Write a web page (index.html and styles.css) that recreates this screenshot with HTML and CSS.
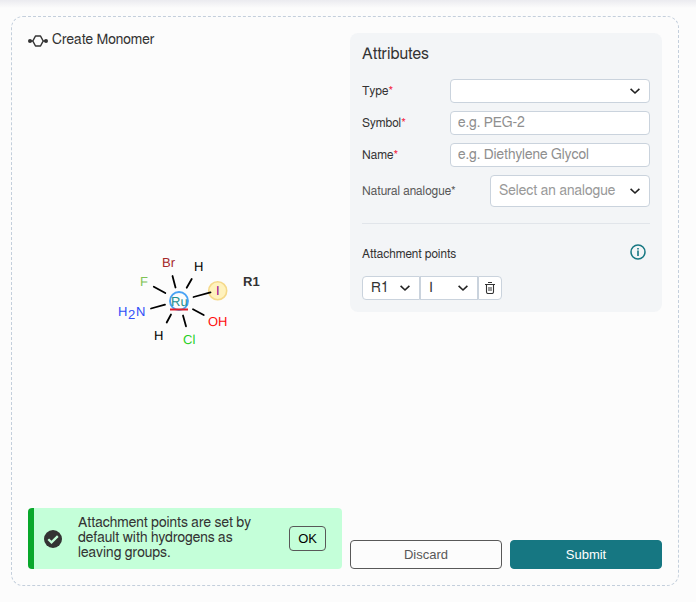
FILE: index.html
```html
<!DOCTYPE html>
<html lang="en">
<head>
<meta charset="utf-8">
<meta name="viewport" content="width=device-width, initial-scale=1">
<title>Create Monomer</title>
<link rel="stylesheet" href="styles.css">
</head>
<body>
<svg class="defs" aria-hidden="true">
  <symbol id="chevron" viewBox="0 0 16 16"><path d="M3.600 5.800l4.400 4.200 4.400-4.200" fill="none" stroke="currentColor" stroke-width="1.600"/></symbol>
</svg>
<main class="wizard">
  <section class="editor">
    <h1 class="heading">
      <svg class="heading-icon" viewBox="0 0 20 16" aria-hidden="true">
        <path d="M7.500 3h5l2.700 5-2.700 5h-5L4.800 8z" fill="none" stroke="#333" stroke-width="1.500" stroke-linejoin="round"/>
        <circle cx="2" cy="8" r="2" fill="#333"/><circle cx="18" cy="8" r="2" fill="#333"/>
        <path d="M2 8h2.800M15.200 8H18" stroke="#333" stroke-width="1.400"/>
      </svg>
      Create Monomer
    </h1>
    <div class="canvas">
      <svg class="molecule" viewBox="100 200 170 160" role="img" aria-label="Ruthenium complex">
        <circle cx="217.700" cy="290.700" r="9" fill="#fff2bd" stroke="#f5d98a" stroke-width="1.600"/>
        <g stroke="#000" stroke-width="1.800" stroke-linecap="round">
          <path d="M172.500 276l3 11.500M191.700 279l-5 8.700M193.500 297l17-4.600M193 309.300l10.700 5.700M183 315.500l3 10.800M171 314.500l-4.300 8M151 308.500l14-3.800M153.800 286.700l11.500 6.300"/>
        </g>
        <circle cx="179" cy="301" r="9" fill="none" stroke="#4aa3f5" stroke-width="1.900"/>
        <path d="M170 309.500h18" stroke="#e0202c" stroke-width="2"/>
        <g class="atoms">
          <text x="140" y="286" fill="#7fc356">F</text>
          <text x="162" y="267" fill="#a62929">Br</text>
          <text x="194" y="271" fill="#000">H</text>
          <text x="216" y="295" fill="#940094">I</text>
          <text x="171" y="306" fill="#248f8f">Ru</text>
          <text x="208" y="326" fill="#ff0d0d">OH</text>
          <text x="183" y="344" fill="#1fcf1f">Cl</text>
          <text x="154" y="340" fill="#000">H</text>
          <text x="118" y="316" fill="#3050f8">H</text>
          <text x="128" y="319" fill="#3050f8">2</text>
          <text x="136" y="316" fill="#3050f8">N</text>
          <text class="r-label" x="243" y="286" fill="#333">R1</text>
        </g>
      </svg>
    </div>
    <div class="notice" role="status">
      <svg class="notice-icon" viewBox="0 0 18 18" aria-hidden="true">
        <circle cx="9" cy="9" r="9" fill="#333"/>
        <path d="M4.300 9.200l3.200 3.200 6.300-6.300" fill="none" stroke="#c4ffd9" stroke-width="2.200"/>
      </svg>
      <p class="notice-text">Attachment points are set by default with hydrogens as leaving groups.</p>
      <button class="button ok" type="button">OK</button>
    </div>
  </section>

  <form class="side">
    <div class="attributes">
      <h2 class="title">Attributes</h2>
      <div class="fields">
        <div class="field">
          <label for="type">Type<span class="required">*</span></label>
          <span class="picker"><select id="type"><option></option></select><svg class="chevron" aria-hidden="true"><use href="#chevron"/></svg></span>
        </div>
        <div class="field">
          <label for="symbol">Symbol<span class="required">*</span></label>
          <input id="symbol" type="text" placeholder="e.g. PEG-2">
        </div>
        <div class="field">
          <label for="name">Name<span class="required">*</span></label>
          <input id="name" type="text" placeholder="e.g. Diethylene Glycol">
        </div>
        <div class="field analogue">
          <label for="analogue">Natural analogue*</label>
          <span class="picker"><select id="analogue"><option>Select an analogue</option></select><svg class="chevron" aria-hidden="true"><use href="#chevron"/></svg></span>
        </div>
      </div>
      <div class="points-head">
        <h3 class="points-title">Attachment points</h3>
        <button class="info" type="button" aria-label="About attachment points">
          <svg viewBox="0 0 16 16" aria-hidden="true"><circle cx="8" cy="8" r="7" fill="none" stroke="#167782" stroke-width="1.500"/><path d="M8 6.500v5.500M8 4v1.500" stroke="#167782" stroke-width="1.600"/></svg>
        </button>
      </div>
      <div class="points">
        <span class="picker"><select aria-label="Attachment point"><option>R1</option></select><svg class="chevron" aria-hidden="true"><use href="#chevron"/></svg></span>
        <span class="picker"><select aria-label="Leaving group"><option>I</option></select><svg class="chevron" aria-hidden="true"><use href="#chevron"/></svg></span>
        <button class="delete" type="button" aria-label="Delete attachment point">
          <svg viewBox="0 0 12 12" aria-hidden="true"><path d="M1 2.500h10M4 .5h4M2.500 2.500v7.500q0 1.500 1.500 1.500h4q1.500 0 1.500-1.500V2.500" fill="none" stroke="#333" stroke-width="1.100"/><path d="M4 5h4v4H4z" fill="#333" opacity=".5"/></svg>
        </button>
      </div>
    </div>
    <div class="actions">
      <button class="button discard" type="button">Discard</button>
      <button class="button submit" type="submit">Submit</button>
    </div>
  </form>
</main>
</body>
</html>
```
FILE: styles.css
```css
* { box-sizing: border-box; }

body {
  margin: 0;
  min-height: 100vh;
  display: flex;
  padding: 16px 17px 16px 11px;
  background: linear-gradient(#ebebf0, #fcfcfc 8px) #fcfcfc;
  color: #333;
  font: 14px/16px FreeSans, "Liberation Sans", Arial, sans-serif;
  font-kerning: none;
}

h1, h2, h3, p { margin: 0; font-weight: 400; }
svg { display: block; }
button, input, select { font: inherit; font-kerning: none; color: inherit; margin: 0; }
button { cursor: pointer; }
.defs { position: absolute; width: 0; height: 0; }

.wizard {
  flex: 1;
  display: grid;
  grid-template-columns: minmax(0, 1fr) 312px;
  gap: 8px;
  padding: 16px;
  border: 1px dashed #c4cfdc;
  border-radius: 12px;
}

.editor { display: flex; flex-direction: column; }

.heading {
  display: flex;
  align-items: flex-start;
  gap: 4px;
  height: 19px;
  font-size: 14px;
  line-height: 15px;
}
.heading-icon { width: 20px; height: 16px; }

.canvas {
  flex: 1;
  display: flex;
  align-items: center;
  justify-content: center;
}
.molecule { width: 170px; height: 160px; text-rendering: geometricPrecision; }
.atoms { font-family: "Liberation Sans", Arial, sans-serif; font-size: 13px; }
.r-label { font-weight: 700; }

.notice {
  display: flex;
  align-items: center;
  gap: 16px;
  padding: 8px 16px 8px 10px;
  border-left: 6px solid #08a82b;
  border-radius: 4px;
  background: #c4ffd9;
}
.notice-icon { flex: none; width: 18px; height: 18px; }
.notice-text { flex: 1; line-height: 15px; }

.button {
  height: 29px;
  border: 1px solid #585858;
  border-radius: 4px;
  background: transparent;
  color: #585858;
  font-family: "Liberation Sans", Arial, sans-serif;
  font-size: 13px;
}
.ok { height: 25px; padding: 0 8px; color: #000; }
.submit { border-color: #167782; background: #167782; color: #fff; }

.side { display: flex; flex-direction: column; justify-content: space-between; }

.attributes {
  padding: 12px;
  border-radius: 8px;
  background: #f3f5f7;
}
.title { margin-bottom: 16px; font-size: 16px; line-height: 18px; }

.fields {
  display: grid;
  gap: 8px;
  padding-bottom: 16px;
  border-bottom: 1px solid #e1e5ea;
}
.field {
  display: grid;
  grid-template-columns: 88px 1fr;
  align-items: center;
  font-size: 12px;
}
.analogue { grid-template-columns: 128px 1fr; color: #585858; }
.required { color: #f4213d; }

input, select {
  width: 100%;
  height: 24px;
  padding: 0 7px;
  border: 1px solid #cad3dd;
  border-radius: 4px;
  background: #fff;
  font-size: 14px;
}
select { appearance: none; padding: 0 8px; }
input::placeholder { color: #8f8f8f; opacity: 1; }
.analogue select { height: 32px; color: #999; }

.picker { display: grid; align-items: center; }
.picker > * { grid-area: 1 / 1; }
.chevron {
  justify-self: end;
  width: 16px;
  height: 16px;
  margin-right: 7px;
  color: #222;
  pointer-events: none;
}

.points-head {
  display: flex;
  justify-content: space-between;
  height: 28px;
  margin: 16px 0 8px;
}
.points-title { font-size: 12px; line-height: 28px; }
.info {
  width: 24px;
  height: 24px;
  padding: 4px;
  border: 0;
  background: none;
}

.points { display: grid; grid-template-columns: 58px 58px 24px; }
.points .picker:first-child select { border-radius: 4px 0 0 4px; }
.points .picker + .picker select { border-radius: 0; }
.delete {
  display: grid;
  place-items: center;
  padding: 0;
  border: 1px solid #cad3dd;
  border-radius: 0 4px 4px 0;
  background: #fff;
}
.delete svg { width: 12px; height: 12px; }

.actions { display: grid; grid-template-columns: 1fr 1fr; gap: 8px; }
```
